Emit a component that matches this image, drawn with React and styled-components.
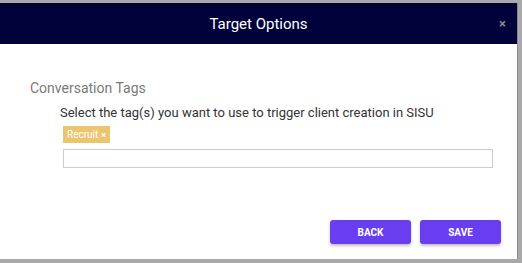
import React from "react";
import styled, { createGlobalStyle } from "styled-components";

const GlobalStyle = createGlobalStyle`
  html, body {
    margin: 0;
    padding: 0;
    background: #a9a9a9;
    font-family: Roboto, "Liberation Sans", sans-serif;
  }
`;

const Modal = styled.div`
  width: 517px;
  height: 256px;
  margin-top: 3px;
  background: #ffffff;
  border-right: 1px solid #8c8c8c;
  display: flex;
  flex-direction: column;
`;

const Header = styled.div`
  height: 41px;
  background: #02023a;
  display: flex;
  align-items: center;
  justify-content: center;
  position: relative;
  color: #ffffff;
  font-size: 15px;
`;

const Close = styled.span`
  position: absolute;
  right: 11px;
  top: 13px;
  color: #8a8a8a;
  font-size: 13px;
  font-weight: 700;
  cursor: pointer;
`;

const Body = styled.div`
  flex: 1;
  padding: 36px 0 0 30px;
  display: flex;
  flex-direction: column;
`;

const SectionTitle = styled.div`
  color: #7a7a7a;
  font-size: 14px;
  line-height: 16px;
`;

const Field = styled.div`
  padding: 9px 24px 0 30px;
  display: flex;
  flex-direction: column;
  align-items: flex-start;
`;

const Label = styled.div`
  color: #333333;
  font-size: 13px;
  line-height: 16px;
`;

const Tag = styled.span`
  margin: 5px 0 0 3px;
  height: 17px;
  padding: 0 4px;
  background: #ecc56f;
  color: #ffffff;
  font-size: 10px;
  display: inline-flex;
  align-items: center;
  gap: 3px;

  > b {
    font-size: 9px;
  }
`;

const TagInput = styled.input`
  box-sizing: border-box;
  margin: 6px 0 0 3px;
  width: 430px;
  height: 19px;
  border: 1px solid #cccccc;
  outline: none;
`;

const Footer = styled.div`
  display: flex;
  justify-content: flex-end;
  gap: 9px;
  padding: 0 16px 15px 0;
`;

const Button = styled.button`
  width: 81px;
  height: 24px;
  border: none;
  border-radius: 3px;
  background: #683ef0;
  color: #ffffff;
  font-family: Roboto, "Liberation Sans", sans-serif;
  font-size: 10px;
  font-weight: 700;
  box-shadow: 0 2px 3px rgba(0, 0, 0, 0.25);
  cursor: pointer;
`;

const App = () => {
  return (
    <>
      <GlobalStyle />
      <Modal>
        <Header>
          Target Options
          <Close>×</Close>
        </Header>
        <Body>
          <SectionTitle>Conversation Tags</SectionTitle>
          <Field>
            <Label>Select the tag(s) you want to use to trigger client creation in SISU</Label>
            <Tag>
              Recruit <b>×</b>
            </Tag>
            <TagInput />
          </Field>
        </Body>
        <Footer>
          <Button>BACK</Button>
          <Button>SAVE</Button>
        </Footer>
      </Modal>
    </>
  );
};

export default App;
